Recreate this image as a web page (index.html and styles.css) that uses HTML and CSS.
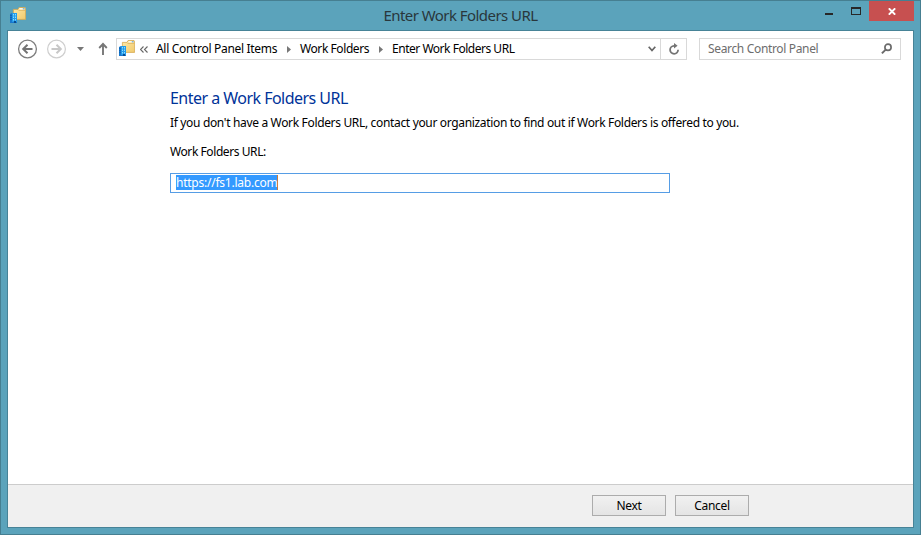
FILE: index.html
```html
<!DOCTYPE html>
<html lang="en">
<head>
<meta charset="utf-8">
<title>Enter Work Folders URL</title>
<link rel="stylesheet" href="styles.css">
</head>
<body>
<svg class="defs" width="0" height="0">
  <defs>
    <linearGradient id="fold" x1="0" y1="0" x2="1" y2="1"><stop offset="0" stop-color="#ffe9a6"/><stop offset="1" stop-color="#f0ca6e"/></linearGradient>
    <symbol id="folder" viewBox="0 0 16 16">
      <path d="M3.400 2.400H8l1-1.900h6l.6.600v11.300H3.400z" fill="url(#fold)" stroke="#d5a951" stroke-width=".8"/>
      <path d="M9.500 1.800h5" stroke="#fff" stroke-width="1.200"/><path d="M12.800 1.800h1.800" stroke="#499be0"/>
      <path d="M8.500 3.500h6.800" stroke="#dfb765" stroke-width=".8"/>
      <path d="M0 7l2-1h5v10H0z" fill="#1777cd"/>
      <path d="M2 6h5v9H2z" fill="#239be9"/>
      <path d="M3.500 7v7M5.500 7v7" stroke="#8dddff" stroke-dasharray="1.500 1"/>
      <path d="M1 8v6" stroke="#0757a3" stroke-dasharray="1 1"/>
      <path d="M4 14h2v2H4z" fill="#074c91"/>
    </symbol>
  </defs>
</svg>
<div class="window">
  <header class="titlebar">
    <svg class="app-icon" width="16" height="16"><use href="#folder"/></svg>
    <h1 class="title"><span>Enter Work Folders URL</span></h1>
    <div class="controls">
      <svg width="79" height="20" shape-rendering="crispEdges"><path d="M35 12h8v2h-8z" fill="#272727"/><path d="M61 6h10v8H61zM62 8v5h8V8z" fill="#272727" fill-rule="evenodd"/></svg>
      <div class="close"><svg width="8" height="7" viewBox="0 0 8 7"><path d="M.8.300l6.400 6.400M7.200.300L.8 6.700" stroke="#fff" stroke-width="1.900"/></svg></div>
    </div>
  </header>
  <main class="client">
    <nav class="toolbar">
      <svg class="history" width="108" height="22" viewBox="0 0 108 22" fill="none">
        <circle cx="19.500" cy="11" r="8.900" stroke="#7d7d7d" stroke-width="1.300"/>
        <path d="M24.500 11h-8M19.500 6.700L15.200 11l4.300 4.300" stroke="#747474" stroke-width="2"/>
        <circle cx="48.500" cy="11" r="8.900" stroke="#cecece" stroke-width="1.200"/>
        <path d="M43.500 11h8M48.500 6.700l4.300 4.300-4.300 4.300" stroke="#c8c8c8" stroke-width="2"/>
        <path d="M69 9h7l-3.500 4z" fill="#777"/>
        <path d="M95 17V6.500M91.200 10L95 6l3.800 4" stroke="#777" stroke-width="1.900"/>
      </svg>
      <div class="address">
        <svg class="place-icon" width="16" height="16"><use href="#folder"/></svg>
        <svg class="back-chevrons" width="8" height="7" fill="none"><path d="M3.500.500l-3 3 3 3M7.500.500l-3 3 3 3" stroke="#666" stroke-width="1.100"/></svg>
        <span class="crumb items">All Control Panel Items</span>
        <svg class="sep" width="4" height="7"><path d="M0 0l4 3.500L0 7z" fill="#777"/></svg>
        <span class="crumb folders">Work Folders</span>
        <svg class="sep" width="4" height="7"><path d="M0 0l4 3.500L0 7z" fill="#777"/></svg>
        <span class="crumb current">Enter Work Folders URL</span>
        <svg class="drop" width="8" height="6" fill="none"><path d="M.700.700L4 4.500 7.300.700" stroke="#666" stroke-width="1.700"/></svg>
        <div class="refresh"><svg width="12" height="12" fill="none"><path d="M6.500 2.800H6A4 4 0 1 0 10.100 6.800" stroke="#747474" stroke-width="1.800"/><path d="M6 0l3.600 2.800L6 5.600z" fill="#747474"/></svg></div>
      </div>
      <div class="search"><span>Search Control Panel</span><svg width="12" height="12" fill="none"><circle cx="7" cy="4.200" r="3.100" stroke="#6b6b6b" stroke-width="1.700"/><path d="M4.700 6.600L.9 10.400" stroke="#6b6b6b" stroke-width="2"/></svg></div>
    </nav>
    <section class="content">
      <h2><span>Enter a Work Folders URL</span></h2>
      <p class="description">If you don't have a Work Folders URL, contact your organization to find out if Work Folders is offered to you.</p>
      <p class="label">Work Folders URL:</p>
      <div class="field"><span>https://fs1.lab.com</span></div>
    </section>
    <footer><div class="button next">Next</div><div class="button cancel">Cancel</div></footer>
  </main>
</div>
</body>
</html>
```
FILE: styles.css
```css
* { box-sizing: border-box; }
body { margin: 0; font: 12px/16px "Noto Sans", "Open Sans", sans-serif; color: #000; }
svg { display: block; flex: none; }
.defs { position: absolute; }
.window { width: 921px; height: 535px; padding: 0 6px 6px; border: 1px solid #467f91; background: #5ba3bb; display: flex; flex-direction: column; }
.titlebar { height: 29px; display: flex; align-items: flex-start; flex: none; }
.app-icon { margin: 6px 0 0 3px; }
.title { flex: 1; margin: 4px 0 0 105px; text-align: center; font-size: 15px; line-height: 20px; font-weight: 400; color: #29373c; white-space: nowrap; letter-spacing: -.55px; }
.controls { display: flex; }
.close { width: 45px; height: 20px; background: #c75050; display: flex; align-items: center; justify-content: center; }
.client { flex: 1; border: 1px solid #478397; background: #fff; display: flex; flex-direction: column; }
.toolbar { height: 36px; padding-top: 7px; display: flex; flex: none; white-space: nowrap; }
.address { width: 571px; height: 22px; border: 1px solid #d9d9d9; display: flex; align-items: center; }
.history { height: 22px; }
.place-icon { margin: -3px 0 0 2px; }
.back-chevrons { margin: 0 8px 0 5px; }
.crumb { letter-spacing: -.42px; }
.crumb.items { width: 131px; letter-spacing: -.31px; }
.crumb.folders { width: 79px; margin-left: 9px; }
.crumb.current { margin-left: 9px; letter-spacing: -.48px; }
.drop { margin-left: auto; margin-right: 4px; }
.refresh { width: 26px; height: 20px; border-left: 1px solid #d9d9d9; display: flex; align-items: center; justify-content: center; }
.search { width: 202px; height: 22px; border: 1px solid #d9d9d9; margin-left: 12px; padding: 0 7px 0 8px; display: flex; align-items: center; justify-content: space-between; color: #6d6d6d; letter-spacing: -.34px; }
.content { flex: 1; padding: 20px 0 0 162px; white-space: nowrap; }
h2 { margin: 0; font-size: 16px; line-height: 22px; font-weight: 400; color: #039; letter-spacing: -.53px; }
p { margin: 0; letter-spacing: -.42px; }
.description { margin-top: 6px; letter-spacing: -.336px; }
.label { margin-top: 13px; }
.field { width: 500px; height: 20px; margin-top: 13px; border: 1px solid #569de5; padding: 1px 5px; }
.field span { display: inline-block; height: 15px; line-height: 15px; background: #39f; color: #fff; border-right: 1px solid #c67a3e; letter-spacing: -.24px; }
footer { height: 43px; background: #f0f0f0; border-top: 1px solid #ccc; display: flex; gap: 9px; padding: 10px 0 0 584px; flex: none; }
.button { width: 74px; height: 21px; border: 1px solid #acacac; background: linear-gradient(#f1f1f1, #e4e4e4); text-align: center; line-height: 19px; letter-spacing: -.3px; }
```
